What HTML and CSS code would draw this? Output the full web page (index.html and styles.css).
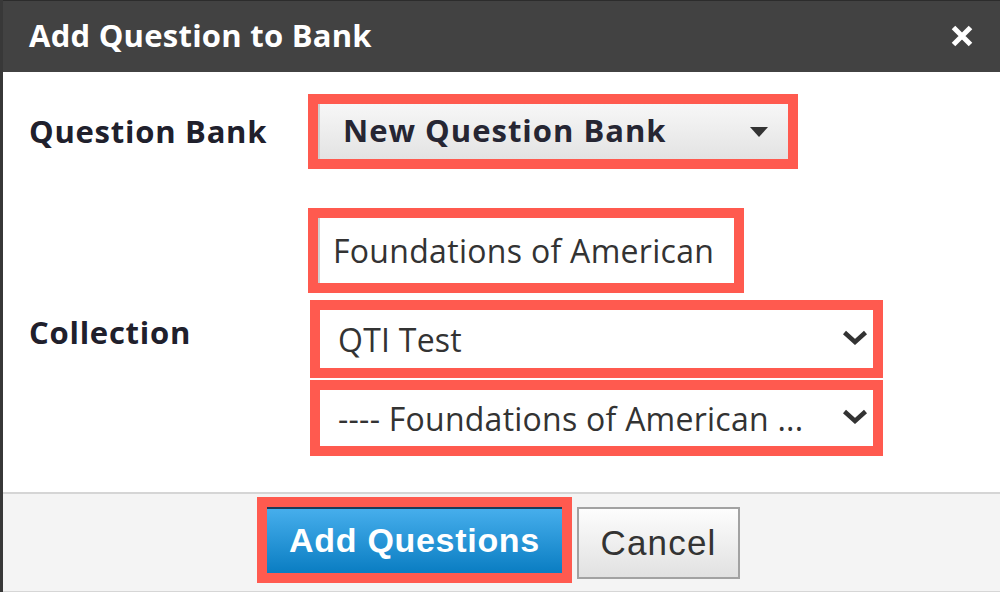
FILE: index.html
```html
<!DOCTYPE html>
<html lang="en">
<head>
<meta charset="utf-8">
<title>Add Question to Bank</title>
<link rel="stylesheet" href="styles.css">
</head>
<body>
<div class="dialog">
  <header class="dlg-head">
    <h1 class="dlg-title">Add Question to Bank</h1>
    <button class="dlg-close" type="button" aria-label="Close">
      <svg width="22" height="22" viewBox="0 0 22 22"><path d="M2.5 2.5 L19.5 19.5 M19.5 2.5 L2.5 19.5" stroke="#fff" stroke-width="5" fill="none"/></svg>
    </button>
  </header>

  <div class="dlg-body">
    <div class="row row-bank">
      <div class="label">Question Bank</div>
      <div class="hl hl-bank">
        <div class="dropdown">
          <span class="dropdown-text">New Question Bank</span>
          <span class="caret"></span>
        </div>
      </div>
    </div>

    <div class="row row-coll">
      <div class="label">Collection</div>
      <div class="fields">
        <div class="hl hl-input">
          <div class="text-input">Foundations of American</div>
        </div>
        <div class="hl hl-sel hl-sel1">
          <div class="select">
            <span class="select-text">QTI Test</span>
            <svg class="chev" width="26" height="15" viewBox="0 0 26 15"><polyline points="2.5,2.5 13,12 23.5,2.5" fill="none" stroke="#333" stroke-width="4.5"/></svg>
          </div>
        </div>
        <div class="hl hl-sel hl-sel2">
          <div class="select">
            <span class="select-text">---- Foundations of American ...</span>
            <svg class="chev" width="26" height="15" viewBox="0 0 26 15"><polyline points="2.5,2.5 13,12 23.5,2.5" fill="none" stroke="#333" stroke-width="4.5"/></svg>
          </div>
        </div>
      </div>
    </div>
  </div>

  <footer class="dlg-foot">
    <div class="hl hl-btn">
      <button class="btn btn-primary" type="button">Add Questions</button>
    </div>
    <button class="btn btn-cancel" type="button">Cancel</button>
  </footer>
</div>
</body>
</html>
```

FILE: styles.css
```css
* { box-sizing: border-box; }

html, body {
  margin: 0;
  padding: 0;
  background: #fff;
}

body {
  width: 1000px;
  height: 592px;
  overflow: hidden;
  font-family: "Open Sans", "Liberation Sans", sans-serif;
}

.dialog {
  height: 592px;
  border-left: 3px solid #383838;
  display: flex;
  flex-direction: column;
}

/* header */
.dlg-head {
  height: 72px;
  flex: 0 0 72px;
  background: #424242;
  border-top: 1px solid #2c2c2c;
  display: flex;
  align-items: center;
  justify-content: space-between;
  padding: 0 27px 0 26px;
}

.dlg-title {
  margin: 0;
  color: #fff;
  font-size: 31px;
  font-weight: 700;
  letter-spacing: 0.25px;
  line-height: 1;
  padding-bottom: 2px;
}

.dlg-close {
  border: 0;
  background: none;
  padding: 0;
  width: 22px;
  height: 22px;
  display: block;
  margin-top: -1px;
}
.dlg-close svg { display: block; }

/* body */
.dlg-body {
  flex: 0 0 420px;
  padding: 22px 0 0 26px;
}

.row {
  display: flex;
  align-items: center;
}

.row-bank { margin-bottom: 39px; }

.label {
  width: 279px;
  flex: 0 0 279px;
  font-size: 31px;
  font-weight: 700;
  letter-spacing: 0.75px;
  color: #20202c;
  line-height: 1;
}

.hl {
  border: 10px solid #ff5a4f;
}

.hl-bank { width: 490px; height: 75px; }

.dropdown {
  height: 100%;
  background: linear-gradient(#f7f7f7, #e3e3e3);
  border-left: 2px solid #cfcfcf;
  display: flex;
  align-items: center;
  justify-content: space-between;
  padding: 0 20px 0 23px;
}

.dropdown-text {
  font-size: 31px;
  font-weight: 700;
  letter-spacing: 1px;
  color: #262633;
  line-height: 1;
  padding-bottom: 2px;
}

.caret {
  width: 0;
  height: 0;
  border-left: 9px solid transparent;
  border-right: 9px solid transparent;
  border-top: 10px solid #333;
  margin-top: 1px;
}

.fields {
  display: flex;
  flex-direction: column;
}

.hl-input { width: 436px; height: 85px; }

.text-input {
  height: 100%;
  background: #fff;
  border-left: 2px solid #d0d0d0;
  display: flex;
  align-items: center;
  padding-left: 13px;
  font-size: 32px;
  letter-spacing: 0.3px;
  color: #333;
  line-height: 1;
}

.hl-sel { width: 573px; margin-left: 2px; }
.hl-sel1 { height: 78px; margin-top: 7px; }
.hl-sel2 { height: 76px; margin-top: 2px; }

.select {
  height: 100%;
  background: #fff;
  display: flex;
  align-items: center;
  justify-content: space-between;
  padding: 0 5px 0 18px;
}

.select-text {
  font-size: 32px;
  letter-spacing: 0.25px;
  color: #333;
  line-height: 1;
  padding-top: 2px;
}

.chev { display: block; margin-top: -4px; }

/* footer */
.dlg-foot {
  flex: 1 1 auto;
  background: #f4f4f4;
  border-top: 2px solid #d5d5d5;
  border-bottom: 1px solid #d6d6d6;
  display: flex;
  align-items: flex-start;
  padding: 3px 0 0 254px;
}

.hl-btn { width: 315px; height: 86px; }

.btn {
  font-family: "Liberation Sans", Arial, sans-serif;
  margin: 0;
  cursor: pointer;
  line-height: 1;
}

.btn-primary {
  width: 100%;
  height: 100%;
  display: block;
  border: 0;
  border-top: 2px solid #1c3b58;
  background: linear-gradient(#46aeec, #0a7dc2);
  color: #fff;
  font-size: 34px;
  font-weight: 700;
  letter-spacing: 0.7px;
  padding: 0 0 2px;
}

.btn-cancel {
  width: 163px;
  height: 72px;
  margin: 10px 0 0 5px;
  border: 2px solid #a2a2a2;
  background: linear-gradient(#fdfdfd, #e1e1e1);
  color: #333;
  font-size: 35px;
  letter-spacing: 1.2px;
  padding: 0 0 2px;
}
```
